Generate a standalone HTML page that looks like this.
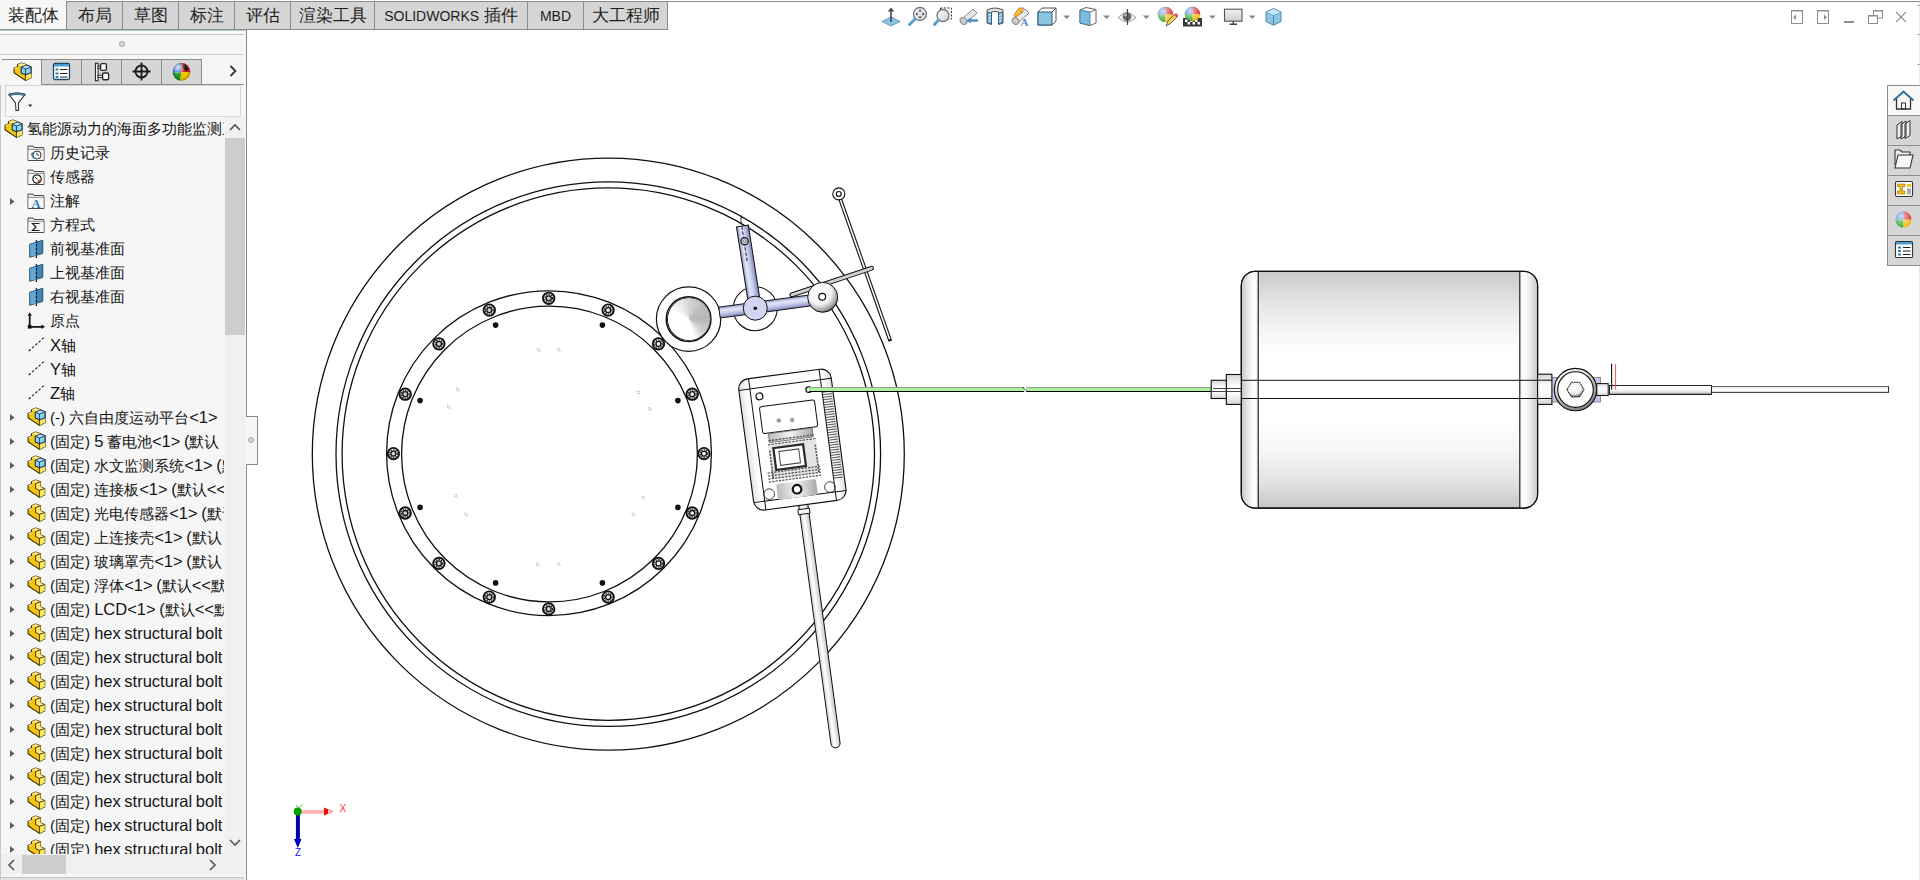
<!DOCTYPE html>
<html><head><meta charset="utf-8">
<style>
*{margin:0;padding:0;box-sizing:border-box}
html,body{width:1920px;height:880px;overflow:hidden;background:#fff;font-family:"Liberation Sans",sans-serif;color:#1a1a1a;position:relative}
.tab{position:absolute;top:1px;height:29px;background:#d5d5d5;border:1px solid #8c8c8c;font-size:17px;line-height:27px;text-align:center;color:#1e1e1e;white-space:nowrap}
.tab.act{background:#f6f6f6;border:none;top:0;height:29px;line-height:31px;padding-left:0}
.lt{font-size:14px}
.row{position:absolute;left:0;width:224px;height:24px;font-size:15px;line-height:24px;white-space:nowrap;color:#141414}
.row .t{position:absolute;top:0}
.row svg{position:absolute}
.ic{position:absolute}
.l{font-size:16.5px;word-spacing:-1px}
svg{overflow:visible}
</style></head><body>
<svg width="0" height="0" style="position:absolute">
<defs>
<symbol id="part" viewBox="0 0 26 26">
<path d="M4.1,8.3 L7.4,7.1 L7.4,4.7 L11.8,3 L16.5,4.7 L16.5,10 L20.7,11.5 L20.7,17.7 L15.4,20.4 L4.1,12.7 Z" fill="#f4c614" stroke="#3b2a00" stroke-width="1.1" stroke-linejoin="round"/>
<path d="M7.4,4.7 L11.8,3 L16.5,4.7 L11.5,6.5 Z" fill="#fbe58a"/>
<path d="M11.5,6.5 L16.5,4.7 L16.5,10 L11.5,11.5 Z" fill="#fbe766"/>
<path d="M11.5,11.5 L16.5,10 L20.7,11.5 L15.4,13.3 Z" fill="#fcef9a"/>
<path d="M15.4,13.3 L20.7,11.5 L20.7,17.7 L15.4,20.4 Z" fill="#fbe45c"/>
<path d="M4.1,8.3 L7.4,7.1 L8.6,8 L5.2,9.3 Z" fill="#fbe58a"/>
<path d="M11.5,6.5 V11.5 L15.4,13.3 V20.4 M11.5,6.5 L16.5,4.7 M15.4,13.3 L20.7,11.5" stroke="#3b2a00" stroke-width="0.9" fill="none"/>
</symbol>
<symbol id="asm" viewBox="0 0 26 26">
<path d="M4.1,8.3 L7.4,7.1 L7.4,4.7 L11.8,3 L16.5,4.7 L21,7 L21,17.7 L15.4,20.4 L4.1,12.7 Z" fill="#f4c614" stroke="#3b2a00" stroke-width="1.1" stroke-linejoin="round"/>
<path d="M7.4,4.7 L11.8,3 L16.5,4.7 L11.5,6.5 Z" fill="#fbe58a"/>
<path d="M4.1,8.3 L7.4,7.1 L8.6,8 L5.2,9.3 Z" fill="#fbe58a"/>
<path d="M15.4,13.3 L21,11.5 L21,17.7 L15.4,20.4 Z" fill="#fbe45c"/>
<path d="M15.4,13.3 V20.4" stroke="#3b2a00" stroke-width="0.9"/>
<path d="M11.2,7.3 L16.5,5.3 L21,7 L21,12.8 L15.5,14.8 L11.2,13 Z" fill="#8fd0ee" stroke="#0d3a5c" stroke-width="1.1" stroke-linejoin="round"/>
<path d="M11.7,7.4 L16.5,5.6 L20.5,7.1 L15.5,8.9 Z" fill="#b8e4f7"/>
<path d="M11.2,7.3 L15.5,9 L21,7 M15.5,9 V14.8" stroke="#0d3a5c" stroke-width="0.9" fill="none"/>
</symbol>
<symbol id="folder" viewBox="0 0 18 18">
<path d="M1,2 L6,2 L7,3.5 L16.5,3.5 L17,5 L17,16.5 L1,16.5 Z" fill="#e6e6e6" stroke="#4a4a4a" stroke-width="1"/>
<path d="M1.5,5.5 L16.5,5.5" stroke="#9a9a9a" stroke-width="1"/>
<rect x="1.5" y="6" width="15" height="10" fill="#f7f7f7"/>
</symbol>
<symbol id="f-hist" viewBox="0 0 18 18"><use href="#folder"/>
<circle cx="10" cy="11" r="4" fill="#fff" stroke="#333" stroke-width="1"/><path d="M10,8.5 V11 H12" stroke="#333" stroke-width="0.9" fill="none"/>
<path d="M3.5,10 L6,8 L6,12 Z" fill="#3a86b8"/><path d="M5,10 Q5,14 9,14.5" stroke="#3a86b8" stroke-width="1.5" fill="none"/></symbol>
<symbol id="f-sens" viewBox="0 0 18 18"><use href="#folder"/>
<circle cx="10" cy="11" r="4.2" fill="#fff" stroke="#222" stroke-width="1.2"/><path d="M8,9 L10.5,11.5" stroke="#333" stroke-width="1"/><path d="M10.5,14.5 A3.5,3.5 0 0 0 13.5,11.5 L11,12 Z" fill="#e03a1e"/></symbol>
<symbol id="f-ann" viewBox="0 0 18 18"><use href="#folder"/>
<text x="9" y="15.8" font-family="Liberation Serif" font-weight="bold" font-size="12.5" fill="#2a79ad" text-anchor="middle">A</text></symbol>
<symbol id="f-eq" viewBox="0 0 18 18"><use href="#folder"/>
<path d="M12.5,7.5 H5.5 L9,11 L5.5,14.5 H12.5" stroke="#222" stroke-width="1.2" fill="none"/></symbol>
<symbol id="plane" viewBox="0 0 18 18">
<path d="M2.7,4.2 L15.8,0.3 L15.8,13.4 L2.7,17.3 Z" fill="#3f86b6" stroke="#1d4f72" stroke-width="0.9"/>
<path d="M3.3,4.6 L9,3 L9,15.4 L3.3,16.6 Z" fill="#6aaad2"/>
<path d="M9.4,0 L9.4,18" stroke="#0b1f30" stroke-width="1.3" stroke-dasharray="2.6,1.3"/>
</symbol>
<symbol id="origin" viewBox="0 0 18 18">
<path d="M2.7,3 V14.8 H15.5" stroke="#111" stroke-width="1.7" fill="none"/>
<path d="M0.6,3.8 L2.7,0.3 L4.8,3.8 Z" fill="#111"/><path d="M14.5,12.6 L18,14.8 L14.5,17 Z" fill="#111"/>
<rect x="0.8" y="12.8" width="3.6" height="3.8" fill="#111"/>
</symbol>
<symbol id="axis" viewBox="0 0 18 18">
<path d="M1.7,15 L17.2,1.4" stroke="#222" stroke-width="1.1" stroke-dasharray="2.6,1.8"/>
</symbol>
</defs></svg>

<div style="position:absolute;left:66px;top:1px;width:1854px;height:1px;background:#8c8c8c"></div>
<div class="tab act" style="left:0px;width:66px">装配体</div>
<div class="tab" style="left:66px;width:57px">布局</div>
<div class="tab" style="left:122px;width:57px">草图</div>
<div class="tab" style="left:178px;width:57px">标注</div>
<div class="tab" style="left:234px;width:57px">评估</div>
<div class="tab" style="left:290px;width:85px">渲染工具</div>
<div class="tab" style="left:374px;width:154px"><span class="lt">SOLIDWORKS</span> 插件</div>
<div class="tab" style="left:527px;width:57px"><span class="lt">MBD</span></div>
<div class="tab" style="left:583px;width:85px">大工程师</div>
<div style="position:absolute;left:0px;top:30px;width:246px;height:850px;background:#f6f6f6"></div>
<div style="position:absolute;left:246px;top:30px;width:1px;height:850px;background:#8a8a8a"></div>
<div style="position:absolute;left:0px;top:29px;width:247px;height:1px;background:#8c8c8c"></div>
<div style="position:absolute;left:0px;top:30px;width:246px;height:1px;background:#a9cccc"></div>
<div style="position:absolute;left:0px;top:31px;width:246px;height:2px;background:#fbfbfb"></div>
<div style="position:absolute;left:0px;top:34px;width:244px;height:1px;background:#c4c4c4"></div>
<div style="position:absolute;left:119px;top:41px;width:6px;height:6px;border-radius:50%;background:#d6d6d6;border:1px solid #a9a9a9"></div>
<div style="position:absolute;left:0px;top:54px;width:244px;height:1px;background:#d2d2d2"></div>
<div style="position:absolute;left:2px;top:59px;width:200px;height:1px;background:#8c8c8c"></div>
<div style="position:absolute;left:41px;top:59px;width:41px;height:25px;background:#d6d6d6;border:1px solid #8c8c8c;border-bottom:none"></div>
<div style="position:absolute;left:81px;top:59px;width:41px;height:25px;background:#d6d6d6;border:1px solid #8c8c8c;border-bottom:none"></div>
<div style="position:absolute;left:121px;top:59px;width:41px;height:25px;background:#d6d6d6;border:1px solid #8c8c8c;border-bottom:none"></div>
<div style="position:absolute;left:161px;top:59px;width:41px;height:25px;background:#d6d6d6;border:1px solid #8c8c8c;border-bottom:none"></div>
<svg class="ic" style="left:9.6px;top:59.5px" width="26" height="26"><use href="#asm"/></svg>
<svg class="ic" style="left:52px;top:62px" width="19" height="19" viewBox="0 0 19 19">
<rect x="1.5" y="1.5" width="16" height="16" rx="1.5" fill="#fff" stroke="#1e4a66" stroke-width="1.3"/>
<rect x="2" y="2" width="15" height="2.5" fill="#4e9ccb"/>
<rect x="3.5" y="6.5" width="3" height="2" fill="#3b7fae"/><path d="M8,7.5 H15.5" stroke="#222" stroke-width="1"/>
<rect x="3.5" y="10.5" width="3" height="2" fill="#3b7fae"/><path d="M8,11.5 H15.5" stroke="#222" stroke-width="1"/>
<rect x="3.5" y="14" width="3" height="2" fill="#3b7fae"/><path d="M8,15 H15.5" stroke="#222" stroke-width="1"/>
</svg>
<svg class="ic" style="left:93px;top:62px" width="17" height="19" viewBox="0 0 17 19">
<rect x="2.5" y="1.3" width="2.6" height="17.4" fill="#fff" stroke="#2a2a2a" stroke-width="1.1"/>
<rect x="5" y="4.2" width="3" height="2.2" fill="#fff" stroke="#2a2a2a" stroke-width="1"/>
<rect x="5" y="13.2" width="4.5" height="2.2" fill="#fff" stroke="#2a2a2a" stroke-width="1"/>
<rect x="7.6" y="1.6" width="5.8" height="6.8" rx="1.3" fill="#fff" stroke="#2a2a2a" stroke-width="1.4"/>
<rect x="9.6" y="11" width="6" height="6.8" rx="1.3" fill="#fff" stroke="#2a2a2a" stroke-width="1.4"/>
</svg>
<svg class="ic" style="left:132px;top:62px" width="19" height="19" viewBox="0 0 19 19">
<circle cx="9.5" cy="9.5" r="6" fill="none" stroke="#1a1a1a" stroke-width="1.8"/>
<path d="M9.5,0.5 V18.5 M0.5,9.5 H18.5" stroke="#1a1a1a" stroke-width="1.8"/>
</svg>
<svg class="ic" style="left:172px;top:62px" width="19" height="19" viewBox="0 0 19 19">
<defs><radialGradient id="bs" cx="0.3" cy="0.25" r="0.45"><stop offset="0" stop-color="#fff" stop-opacity="0.85"/><stop offset="1" stop-color="#fff" stop-opacity="0"/></radialGradient>
<radialGradient id="bsh" cx="0.5" cy="0.5" r="0.5"><stop offset="0.7" stop-color="#000" stop-opacity="0"/><stop offset="1" stop-color="#000" stop-opacity="0.35"/></radialGradient></defs>
<path d="M9.5,10 L9,1 A8.8,8.8 0 0 0 0.7,10.5 Z" fill="#1f5fd8"/>
<path d="M9.5,10 L0.7,10.5 A8.8,8.8 0 0 0 8,18.7 Z" fill="#1d9a2a"/>
<path d="M9.5,10 L8,18.7 A8.8,8.8 0 0 0 18.3,10 Z" fill="#f2c200"/>
<path d="M9.5,10 L18.3,10 A8.8,8.8 0 0 0 9,1 Z" fill="#dd1f1f"/>
<ellipse cx="13.3" cy="5.8" rx="1.9" ry="3.6" transform="rotate(-35 13.3 5.8)" fill="#151515"/>
<circle cx="9.5" cy="9.8" r="8.8" fill="url(#bsh)"/>
<circle cx="9.5" cy="9.8" r="8.8" fill="url(#bs)"/>
</svg>
<svg class="ic" style="left:229px;top:65px" width="8" height="12" viewBox="0 0 8 12"><path d="M1.5,1 L6.5,6 L1.5,11" fill="none" stroke="#333" stroke-width="1.8"/></svg>
<div style="position:absolute;left:41px;top:84px;width:203px;height:1px;background:#8c8c8c"></div>
<div style="position:absolute;left:5px;top:85px;width:236px;height:32px;background:#f7f7f7;border:1px solid #d6d6d6"></div>
<div style="position:absolute;left:0px;top:85px;width:1px;height:795px;background:#c8c8c8"></div>
<svg class="ic" style="left:8px;top:92px" width="26" height="20" viewBox="0 0 26 20">
<path d="M1,2.5 Q9,0 17,2.5 L10.5,11 L10.5,18.5 L8,18.5 L7.5,11 Z" fill="#fff" stroke="#333" stroke-width="1.1"/>
<path d="M1,2 Q9,-0.5 17,2 L17,3.5 Q9,1 1,3.5 Z" fill="#4e9ccb" stroke="#1e4a66" stroke-width="0.8"/>
<path d="M20,12.5 L24.5,12.5 L22.25,15 Z" fill="#333"/>
</svg>
<div style="position:absolute;left:0;top:117px;width:224px;height:738px;overflow:hidden">
<div class="row" style="top:0px">
<svg style="left:1.4px;top:0px" width="26" height="26"><use href="#asm"/></svg>
<div class="t" style="left:27px">氢能源动力的海面多功能监测系统</div>
</div>
<div class="row" style="top:24px">
<svg style="left:27px;top:3px" width="18" height="18"><use href="#f-hist"/></svg>
<div class="t" style="left:50px">历史记录</div>
</div>
<div class="row" style="top:48px">
<svg style="left:27px;top:3px" width="18" height="18"><use href="#f-sens"/></svg>
<div class="t" style="left:50px">传感器</div>
</div>
<div class="row" style="top:72px">
<svg style="left:10px;top:9px" width="5" height="7" viewBox="0 0 5 7"><path d="M0,0 L4.5,3.5 L0,7 Z" fill="#5c5c5c"/></svg>
<svg style="left:27px;top:3px" width="18" height="18"><use href="#f-ann"/></svg>
<div class="t" style="left:50px">注解</div>
</div>
<div class="row" style="top:96px">
<svg style="left:27px;top:3px" width="18" height="18"><use href="#f-eq"/></svg>
<div class="t" style="left:50px">方程式</div>
</div>
<div class="row" style="top:120px">
<svg style="left:27px;top:3px" width="18" height="18"><use href="#plane"/></svg>
<div class="t" style="left:50px">前视基准面</div>
</div>
<div class="row" style="top:144px">
<svg style="left:27px;top:3px" width="18" height="18"><use href="#plane"/></svg>
<div class="t" style="left:50px">上视基准面</div>
</div>
<div class="row" style="top:168px">
<svg style="left:27px;top:3px" width="18" height="18"><use href="#plane"/></svg>
<div class="t" style="left:50px">右视基准面</div>
</div>
<div class="row" style="top:192px">
<svg style="left:27px;top:3px" width="18" height="18"><use href="#origin"/></svg>
<div class="t" style="left:50px">原点</div>
</div>
<div class="row" style="top:216px">
<svg style="left:27px;top:3px" width="18" height="18"><use href="#axis"/></svg>
<div class="t" style="left:50px"><span class="l">X</span>轴</div>
</div>
<div class="row" style="top:240px">
<svg style="left:27px;top:3px" width="18" height="18"><use href="#axis"/></svg>
<div class="t" style="left:50px"><span class="l">Y</span>轴</div>
</div>
<div class="row" style="top:264px">
<svg style="left:27px;top:3px" width="18" height="18"><use href="#axis"/></svg>
<div class="t" style="left:50px"><span class="l">Z</span>轴</div>
</div>
<div class="row" style="top:288px">
<svg style="left:10px;top:9px" width="5" height="7" viewBox="0 0 5 7"><path d="M0,0 L4.5,3.5 L0,7 Z" fill="#5c5c5c"/></svg>
<svg style="left:24px;top:0px" width="26" height="26"><use href="#asm"/></svg>
<div class="t" style="left:50px">(-) 六自由度运动平台<span class="l">&lt;1&gt;</span></div>
</div>
<div class="row" style="top:312px">
<svg style="left:10px;top:9px" width="5" height="7" viewBox="0 0 5 7"><path d="M0,0 L4.5,3.5 L0,7 Z" fill="#5c5c5c"/></svg>
<svg style="left:24px;top:0px" width="26" height="26"><use href="#asm"/></svg>
<div class="t" style="left:50px">(固定) <span class="l">5 </span>蓄电池<span class="l">&lt;1&gt; (</span>默认</div>
</div>
<div class="row" style="top:336px">
<svg style="left:10px;top:9px" width="5" height="7" viewBox="0 0 5 7"><path d="M0,0 L4.5,3.5 L0,7 Z" fill="#5c5c5c"/></svg>
<svg style="left:24px;top:0px" width="26" height="26"><use href="#asm"/></svg>
<div class="t" style="left:50px">(固定) 水文监测系统<span class="l">&lt;1&gt; (</span>默认</div>
</div>
<div class="row" style="top:360px">
<svg style="left:10px;top:9px" width="5" height="7" viewBox="0 0 5 7"><path d="M0,0 L4.5,3.5 L0,7 Z" fill="#5c5c5c"/></svg>
<svg style="left:24px;top:0px" width="26" height="26"><use href="#part"/></svg>
<div class="t" style="left:50px">(固定) 连接板<span class="l">&lt;1&gt; (</span>默认<span class="l">&lt;&lt;</span></div>
</div>
<div class="row" style="top:384px">
<svg style="left:10px;top:9px" width="5" height="7" viewBox="0 0 5 7"><path d="M0,0 L4.5,3.5 L0,7 Z" fill="#5c5c5c"/></svg>
<svg style="left:24px;top:0px" width="26" height="26"><use href="#part"/></svg>
<div class="t" style="left:50px">(固定) 光电传感器<span class="l">&lt;1&gt; (</span>默认</div>
</div>
<div class="row" style="top:408px">
<svg style="left:10px;top:9px" width="5" height="7" viewBox="0 0 5 7"><path d="M0,0 L4.5,3.5 L0,7 Z" fill="#5c5c5c"/></svg>
<svg style="left:24px;top:0px" width="26" height="26"><use href="#part"/></svg>
<div class="t" style="left:50px">(固定) 上连接壳<span class="l">&lt;1&gt; (</span>默认</div>
</div>
<div class="row" style="top:432px">
<svg style="left:10px;top:9px" width="5" height="7" viewBox="0 0 5 7"><path d="M0,0 L4.5,3.5 L0,7 Z" fill="#5c5c5c"/></svg>
<svg style="left:24px;top:0px" width="26" height="26"><use href="#part"/></svg>
<div class="t" style="left:50px">(固定) 玻璃罩壳<span class="l">&lt;1&gt; (</span>默认</div>
</div>
<div class="row" style="top:456px">
<svg style="left:10px;top:9px" width="5" height="7" viewBox="0 0 5 7"><path d="M0,0 L4.5,3.5 L0,7 Z" fill="#5c5c5c"/></svg>
<svg style="left:24px;top:0px" width="26" height="26"><use href="#part"/></svg>
<div class="t" style="left:50px">(固定) 浮体<span class="l">&lt;1&gt; (</span>默认<span class="l">&lt;&lt;</span>默</div>
</div>
<div class="row" style="top:480px">
<svg style="left:10px;top:9px" width="5" height="7" viewBox="0 0 5 7"><path d="M0,0 L4.5,3.5 L0,7 Z" fill="#5c5c5c"/></svg>
<svg style="left:24px;top:0px" width="26" height="26"><use href="#part"/></svg>
<div class="t" style="left:50px">(固定) <span class="l">LCD&lt;1&gt; (</span>默认<span class="l">&lt;&lt;</span>默</div>
</div>
<div class="row" style="top:504px">
<svg style="left:10px;top:9px" width="5" height="7" viewBox="0 0 5 7"><path d="M0,0 L4.5,3.5 L0,7 Z" fill="#5c5c5c"/></svg>
<svg style="left:24px;top:0px" width="26" height="26"><use href="#part"/></svg>
<div class="t" style="left:50px">(固定) <span class="l">hex structural bolt</span></div>
</div>
<div class="row" style="top:528px">
<svg style="left:10px;top:9px" width="5" height="7" viewBox="0 0 5 7"><path d="M0,0 L4.5,3.5 L0,7 Z" fill="#5c5c5c"/></svg>
<svg style="left:24px;top:0px" width="26" height="26"><use href="#part"/></svg>
<div class="t" style="left:50px">(固定) <span class="l">hex structural bolt</span></div>
</div>
<div class="row" style="top:552px">
<svg style="left:10px;top:9px" width="5" height="7" viewBox="0 0 5 7"><path d="M0,0 L4.5,3.5 L0,7 Z" fill="#5c5c5c"/></svg>
<svg style="left:24px;top:0px" width="26" height="26"><use href="#part"/></svg>
<div class="t" style="left:50px">(固定) <span class="l">hex structural bolt</span></div>
</div>
<div class="row" style="top:576px">
<svg style="left:10px;top:9px" width="5" height="7" viewBox="0 0 5 7"><path d="M0,0 L4.5,3.5 L0,7 Z" fill="#5c5c5c"/></svg>
<svg style="left:24px;top:0px" width="26" height="26"><use href="#part"/></svg>
<div class="t" style="left:50px">(固定) <span class="l">hex structural bolt</span></div>
</div>
<div class="row" style="top:600px">
<svg style="left:10px;top:9px" width="5" height="7" viewBox="0 0 5 7"><path d="M0,0 L4.5,3.5 L0,7 Z" fill="#5c5c5c"/></svg>
<svg style="left:24px;top:0px" width="26" height="26"><use href="#part"/></svg>
<div class="t" style="left:50px">(固定) <span class="l">hex structural bolt</span></div>
</div>
<div class="row" style="top:624px">
<svg style="left:10px;top:9px" width="5" height="7" viewBox="0 0 5 7"><path d="M0,0 L4.5,3.5 L0,7 Z" fill="#5c5c5c"/></svg>
<svg style="left:24px;top:0px" width="26" height="26"><use href="#part"/></svg>
<div class="t" style="left:50px">(固定) <span class="l">hex structural bolt</span></div>
</div>
<div class="row" style="top:648px">
<svg style="left:10px;top:9px" width="5" height="7" viewBox="0 0 5 7"><path d="M0,0 L4.5,3.5 L0,7 Z" fill="#5c5c5c"/></svg>
<svg style="left:24px;top:0px" width="26" height="26"><use href="#part"/></svg>
<div class="t" style="left:50px">(固定) <span class="l">hex structural bolt</span></div>
</div>
<div class="row" style="top:672px">
<svg style="left:10px;top:9px" width="5" height="7" viewBox="0 0 5 7"><path d="M0,0 L4.5,3.5 L0,7 Z" fill="#5c5c5c"/></svg>
<svg style="left:24px;top:0px" width="26" height="26"><use href="#part"/></svg>
<div class="t" style="left:50px">(固定) <span class="l">hex structural bolt</span></div>
</div>
<div class="row" style="top:696px">
<svg style="left:10px;top:9px" width="5" height="7" viewBox="0 0 5 7"><path d="M0,0 L4.5,3.5 L0,7 Z" fill="#5c5c5c"/></svg>
<svg style="left:24px;top:0px" width="26" height="26"><use href="#part"/></svg>
<div class="t" style="left:50px">(固定) <span class="l">hex structural bolt</span></div>
</div>
<div class="row" style="top:720px">
<svg style="left:10px;top:9px" width="5" height="7" viewBox="0 0 5 7"><path d="M0,0 L4.5,3.5 L0,7 Z" fill="#5c5c5c"/></svg>
<svg style="left:24px;top:0px" width="26" height="26"><use href="#part"/></svg>
<div class="t" style="left:50px">(固定) <span class="l">hex structural bolt</span></div>
</div>
</div>
<div style="position:absolute;left:225px;top:117px;width:20px;height:758px;background:#f0f0f0"></div>
<div style="position:absolute;left:225px;top:138px;width:20px;height:197px;background:#cdcdcd"></div>
<svg class="ic" style="left:229px;top:123px" width="12" height="8" viewBox="0 0 12 8"><path d="M1,7 L6,2 L11,7" fill="none" stroke="#555" stroke-width="1.6"/></svg>
<svg class="ic" style="left:229px;top:839px" width="12" height="8" viewBox="0 0 12 8"><path d="M1,1 L6,6 L11,1" fill="none" stroke="#555" stroke-width="1.6"/></svg>
<div style="position:absolute;left:1px;top:854px;width:224px;height:20px;background:#f0f0f0"></div>
<div style="position:absolute;left:22px;top:855px;width:44px;height:19px;background:#cdcdcd"></div>
<svg class="ic" style="left:7px;top:859px" width="8" height="12" viewBox="0 0 8 12"><path d="M7,1 L2,6 L7,11" fill="none" stroke="#555" stroke-width="1.6"/></svg>
<svg class="ic" style="left:209px;top:859px" width="8" height="12" viewBox="0 0 8 12"><path d="M1,1 L6,6 L1,11" fill="none" stroke="#555" stroke-width="1.6"/></svg>
<div style="position:absolute;left:1px;top:877px;width:243px;height:1px;background:#c4c4c4"></div>
<div style="position:absolute;left:1px;top:878px;width:243px;height:2px;background:#e2e2e2"></div>
<div style="position:absolute;left:246px;top:416px;width:12px;height:49px;background:#f6f6f6;border:1px solid #8a8a8a;border-left:none"></div>
<div style="position:absolute;left:248px;top:437px;width:6px;height:6px;border-radius:50%;background:#d6d6d6;border:1px solid #a9a9a9"></div>
<svg style="position:absolute;left:0;top:0" width="1920" height="880" viewBox="0 0 1920 880">
<defs>
<linearGradient id="tankV" x1="0" y1="271" x2="0" y2="508" gradientUnits="userSpaceOnUse">
<stop offset="0" stop-color="#c8c8c8"/><stop offset="0.12" stop-color="#e2e2e2"/><stop offset="0.26" stop-color="#f6f6f6"/><stop offset="0.36" stop-color="#ffffff"/>
<stop offset="0.62" stop-color="#ffffff"/><stop offset="0.76" stop-color="#f6f6f6"/><stop offset="0.9" stop-color="#e0e0e0"/><stop offset="1" stop-color="#c6c6c6"/></linearGradient>
<linearGradient id="capL" x1="1241" y1="0" x2="1258" y2="0" gradientUnits="userSpaceOnUse"><stop offset="0" stop-color="#c4c4c4"/><stop offset="0.45" stop-color="#ececec"/><stop offset="0.8" stop-color="#ffffff"/><stop offset="1" stop-color="#f0f0f0"/></linearGradient>
<linearGradient id="capR" x1="1538" y1="0" x2="1520" y2="0" gradientUnits="userSpaceOnUse"><stop offset="0" stop-color="#c4c4c4"/><stop offset="0.45" stop-color="#ececec"/><stop offset="0.8" stop-color="#ffffff"/><stop offset="1" stop-color="#f0f0f0"/></linearGradient>
<linearGradient id="fitV" x1="0" y1="0" x2="0" y2="1"><stop offset="0" stop-color="#d6d6d6"/><stop offset="0.35" stop-color="#fafafa"/><stop offset="0.65" stop-color="#fafafa"/><stop offset="1" stop-color="#d6d6d6"/></linearGradient>
<linearGradient id="lav" x1="0" y1="0" x2="0" y2="1"><stop offset="0" stop-color="#8e96c4"/><stop offset="0.3" stop-color="#e4e7fb"/><stop offset="0.6" stop-color="#c9cdee"/><stop offset="1" stop-color="#7e86b8"/></linearGradient>
<linearGradient id="rodG" x1="0" y1="0" x2="1" y2="0"><stop offset="0" stop-color="#d0d0d0"/><stop offset="0.4" stop-color="#ffffff"/><stop offset="1" stop-color="#c8c8c8"/></linearGradient>
<radialGradient id="ballG" cx="0.4" cy="0.35" r="0.7"><stop offset="0" stop-color="#ffffff"/><stop offset="0.55" stop-color="#f4f4f4"/><stop offset="0.85" stop-color="#a0a0a0"/><stop offset="1" stop-color="#303030"/></radialGradient>
<radialGradient id="valG" cx="0.45" cy="0.4" r="0.65"><stop offset="0" stop-color="#ffffff"/><stop offset="0.6" stop-color="#eeeeee"/><stop offset="1" stop-color="#555555"/></radialGradient>
<linearGradient id="pipeG" x1="0" y1="0" x2="0" y2="1"><stop offset="0" stop-color="#ffffff"/><stop offset="0.55" stop-color="#f6f6f6"/><stop offset="0.8" stop-color="#d0d0d0"/><stop offset="1" stop-color="#707070"/></linearGradient>
<linearGradient id="gaugeG" x1="0" y1="0" x2="1" y2="1"><stop offset="0" stop-color="#ffffff"/><stop offset="0.5" stop-color="#e6e6e6"/><stop offset="0.75" stop-color="#b8b8b8"/><stop offset="1" stop-color="#f4f4f4"/></linearGradient>
</defs>
<circle cx="608.3" cy="454.1" r="296" fill="none" stroke="#101010" stroke-width="1.3"/>
<circle cx="608.3" cy="454.1" r="272.3" fill="none" stroke="#101010" stroke-width="1.3"/>
<circle cx="608.3" cy="454.1" r="266.2" fill="none" stroke="#101010" stroke-width="1.3"/>
<circle cx="549" cy="453.2" r="162.4" fill="none" stroke="#101010" stroke-width="1.3"/>
<circle cx="549.5" cy="454" r="147.9" fill="none" stroke="#101010" stroke-width="1.3"/>
<circle cx="548.7" cy="298.3" r="5.7" fill="#fff" stroke="#101010" stroke-width="1.9"/>
<circle cx="548.7" cy="298.3" r="3.9" fill="none" stroke="#222" stroke-width="1.1" stroke-dasharray="1.6,0.9"/>
<circle cx="548.7" cy="298.3" r="2.5" fill="#d6d0cb" stroke="#101010" stroke-width="1.3"/>
<circle cx="608.1" cy="310.1" r="5.7" fill="#fff" stroke="#101010" stroke-width="1.9"/>
<circle cx="608.1" cy="310.1" r="3.9" fill="none" stroke="#222" stroke-width="1.1" stroke-dasharray="1.6,0.9"/>
<circle cx="608.1" cy="310.1" r="2.5" fill="#f4f4f4" stroke="#101010" stroke-width="1.3"/>
<circle cx="658.5" cy="343.8" r="5.7" fill="#fff" stroke="#101010" stroke-width="1.9"/>
<circle cx="658.5" cy="343.8" r="3.9" fill="none" stroke="#222" stroke-width="1.1" stroke-dasharray="1.6,0.9"/>
<circle cx="658.5" cy="343.8" r="2.5" fill="#f4f4f4" stroke="#101010" stroke-width="1.3"/>
<circle cx="692.2" cy="394.2" r="5.7" fill="#fff" stroke="#101010" stroke-width="1.9"/>
<circle cx="692.2" cy="394.2" r="3.9" fill="none" stroke="#222" stroke-width="1.1" stroke-dasharray="1.6,0.9"/>
<circle cx="692.2" cy="394.2" r="2.5" fill="#f4f4f4" stroke="#101010" stroke-width="1.3"/>
<circle cx="704.0" cy="453.6" r="5.7" fill="#fff" stroke="#101010" stroke-width="1.9"/>
<circle cx="704.0" cy="453.6" r="3.9" fill="none" stroke="#222" stroke-width="1.1" stroke-dasharray="1.6,0.9"/>
<circle cx="704.0" cy="453.6" r="2.5" fill="#f4f4f4" stroke="#101010" stroke-width="1.3"/>
<circle cx="692.2" cy="513.0" r="5.7" fill="#fff" stroke="#101010" stroke-width="1.9"/>
<circle cx="692.2" cy="513.0" r="3.9" fill="none" stroke="#222" stroke-width="1.1" stroke-dasharray="1.6,0.9"/>
<circle cx="692.2" cy="513.0" r="2.5" fill="#f4f4f4" stroke="#101010" stroke-width="1.3"/>
<circle cx="658.5" cy="563.4" r="5.7" fill="#fff" stroke="#101010" stroke-width="1.9"/>
<circle cx="658.5" cy="563.4" r="3.9" fill="none" stroke="#222" stroke-width="1.1" stroke-dasharray="1.6,0.9"/>
<circle cx="658.5" cy="563.4" r="2.5" fill="#f4f4f4" stroke="#101010" stroke-width="1.3"/>
<circle cx="608.1" cy="597.1" r="5.7" fill="#fff" stroke="#101010" stroke-width="1.9"/>
<circle cx="608.1" cy="597.1" r="3.9" fill="none" stroke="#222" stroke-width="1.1" stroke-dasharray="1.6,0.9"/>
<circle cx="608.1" cy="597.1" r="2.5" fill="#f4f4f4" stroke="#101010" stroke-width="1.3"/>
<circle cx="548.7" cy="608.9" r="5.7" fill="#fff" stroke="#101010" stroke-width="1.9"/>
<circle cx="548.7" cy="608.9" r="3.9" fill="none" stroke="#222" stroke-width="1.1" stroke-dasharray="1.6,0.9"/>
<circle cx="548.7" cy="608.9" r="2.5" fill="#d6d0cb" stroke="#101010" stroke-width="1.3"/>
<circle cx="489.3" cy="597.1" r="5.7" fill="#fff" stroke="#101010" stroke-width="1.9"/>
<circle cx="489.3" cy="597.1" r="3.9" fill="none" stroke="#222" stroke-width="1.1" stroke-dasharray="1.6,0.9"/>
<circle cx="489.3" cy="597.1" r="2.5" fill="#d6d0cb" stroke="#101010" stroke-width="1.3"/>
<circle cx="438.9" cy="563.4" r="5.7" fill="#fff" stroke="#101010" stroke-width="1.9"/>
<circle cx="438.9" cy="563.4" r="3.9" fill="none" stroke="#222" stroke-width="1.1" stroke-dasharray="1.6,0.9"/>
<circle cx="438.9" cy="563.4" r="2.5" fill="#d6d0cb" stroke="#101010" stroke-width="1.3"/>
<circle cx="405.2" cy="513.0" r="5.7" fill="#fff" stroke="#101010" stroke-width="1.9"/>
<circle cx="405.2" cy="513.0" r="3.9" fill="none" stroke="#222" stroke-width="1.1" stroke-dasharray="1.6,0.9"/>
<circle cx="405.2" cy="513.0" r="2.5" fill="#d6d0cb" stroke="#101010" stroke-width="1.3"/>
<circle cx="393.4" cy="453.6" r="5.7" fill="#fff" stroke="#101010" stroke-width="1.9"/>
<circle cx="393.4" cy="453.6" r="3.9" fill="none" stroke="#222" stroke-width="1.1" stroke-dasharray="1.6,0.9"/>
<circle cx="393.4" cy="453.6" r="2.5" fill="#d6d0cb" stroke="#101010" stroke-width="1.3"/>
<circle cx="405.2" cy="394.2" r="5.7" fill="#fff" stroke="#101010" stroke-width="1.9"/>
<circle cx="405.2" cy="394.2" r="3.9" fill="none" stroke="#222" stroke-width="1.1" stroke-dasharray="1.6,0.9"/>
<circle cx="405.2" cy="394.2" r="2.5" fill="#d6d0cb" stroke="#101010" stroke-width="1.3"/>
<circle cx="438.9" cy="343.8" r="5.7" fill="#fff" stroke="#101010" stroke-width="1.9"/>
<circle cx="438.9" cy="343.8" r="3.9" fill="none" stroke="#222" stroke-width="1.1" stroke-dasharray="1.6,0.9"/>
<circle cx="438.9" cy="343.8" r="2.5" fill="#d6d0cb" stroke="#101010" stroke-width="1.3"/>
<circle cx="489.3" cy="310.1" r="5.7" fill="#fff" stroke="#101010" stroke-width="1.9"/>
<circle cx="489.3" cy="310.1" r="3.9" fill="none" stroke="#222" stroke-width="1.1" stroke-dasharray="1.6,0.9"/>
<circle cx="489.3" cy="310.1" r="2.5" fill="#d6d0cb" stroke="#101010" stroke-width="1.3"/>
<circle cx="602.4" cy="325.1" r="2.8" fill="#101010"/>
<circle cx="677.9" cy="400.6" r="2.8" fill="#101010"/>
<circle cx="677.9" cy="507.4" r="2.8" fill="#101010"/>
<circle cx="602.4" cy="582.9" r="2.8" fill="#101010"/>
<circle cx="495.6" cy="582.9" r="2.8" fill="#101010"/>
<circle cx="420.1" cy="507.4" r="2.8" fill="#101010"/>
<circle cx="420.1" cy="400.6" r="2.8" fill="#101010"/>
<circle cx="495.6" cy="325.1" r="2.8" fill="#101010"/>
<g fill="#9a9a9a"><rect x="536.9" y="348.1" width="1" height="1"/><rect x="538.9" y="348.6" width="1" height="1"/><rect x="537.4" y="350.1" width="1" height="1"/><rect x="539.4" y="350.6" width="1" height="1"/></g>
<g fill="#9a9a9a"><rect x="557.0" y="348.1" width="1" height="1"/><rect x="559.0" y="348.6" width="1" height="1"/><rect x="557.5" y="350.1" width="1" height="1"/><rect x="559.5" y="350.6" width="1" height="1"/></g>
<g fill="#9a9a9a"><rect x="455.8" y="387.9" width="1" height="1"/><rect x="457.8" y="388.4" width="1" height="1"/><rect x="456.3" y="389.9" width="1" height="1"/><rect x="458.3" y="390.4" width="1" height="1"/></g>
<g fill="#9a9a9a"><rect x="446.9" y="405.2" width="1" height="1"/><rect x="448.9" y="405.7" width="1" height="1"/><rect x="447.4" y="407.2" width="1" height="1"/><rect x="449.4" y="407.7" width="1" height="1"/></g>
<g fill="#9a9a9a"><rect x="636.6" y="390.5" width="1" height="1"/><rect x="638.6" y="391" width="1" height="1"/><rect x="637.1" y="392.5" width="1" height="1"/><rect x="639.1" y="393" width="1" height="1"/></g>
<g fill="#9a9a9a"><rect x="647.8" y="407.2" width="1" height="1"/><rect x="649.8" y="407.7" width="1" height="1"/><rect x="648.3" y="409.2" width="1" height="1"/><rect x="650.3" y="409.7" width="1" height="1"/></g>
<g fill="#9a9a9a"><rect x="453.8" y="494.1" width="1" height="1"/><rect x="455.8" y="494.6" width="1" height="1"/><rect x="454.3" y="496.1" width="1" height="1"/><rect x="456.3" y="496.6" width="1" height="1"/></g>
<g fill="#9a9a9a"><rect x="464.3" y="512.7" width="1" height="1"/><rect x="466.3" y="513.2" width="1" height="1"/><rect x="464.8" y="514.7" width="1" height="1"/><rect x="466.8" y="515.2" width="1" height="1"/></g>
<g fill="#9a9a9a"><rect x="641.3" y="495.7" width="1" height="1"/><rect x="643.3" y="496.2" width="1" height="1"/><rect x="641.8" y="497.7" width="1" height="1"/><rect x="643.8" y="498.2" width="1" height="1"/></g>
<g fill="#9a9a9a"><rect x="631.6" y="512.7" width="1" height="1"/><rect x="633.6" y="513.2" width="1" height="1"/><rect x="632.1" y="514.7" width="1" height="1"/><rect x="634.1" y="515.2" width="1" height="1"/></g>
<g fill="#9a9a9a"><rect x="535.8" y="562.5" width="1" height="1"/><rect x="537.8" y="563" width="1" height="1"/><rect x="536.3" y="564.5" width="1" height="1"/><rect x="538.3" y="565" width="1" height="1"/></g>
<g fill="#9a9a9a"><rect x="557.0" y="562.5" width="1" height="1"/><rect x="559.0" y="563" width="1" height="1"/><rect x="557.5" y="564.5" width="1" height="1"/><rect x="559.5" y="565" width="1" height="1"/></g>
<line x1="840.3" y1="199.5" x2="889.7" y2="339.3" stroke="#101010" stroke-width="3.8" stroke-linecap="square"/>
<line x1="840.3" y1="199.5" x2="889.7" y2="339.3" stroke="#fff" stroke-width="1.6"/>
<circle cx="838.8" cy="193.9" r="6" fill="#fff" stroke="#101010" stroke-width="1.1"/>
<circle cx="838.8" cy="193.9" r="2.4" fill="#fff" stroke="#101010" stroke-width="1.2"/>
<circle cx="688.6" cy="319.1" r="32.2" fill="#fff" stroke="#101010" stroke-width="1.2"/>
<circle cx="688.6" cy="319.2" r="22.4" fill="#fff" stroke="#101010" stroke-width="1.4"/>
<circle cx="688.6" cy="319.2" r="21" fill="none" stroke="#101010" stroke-width="1.2"/>
<circle cx="755.2" cy="308.7" r="22" fill="#fff" stroke="#101010" stroke-width="1.1"/>
<line x1="791.9" y1="294.9" x2="871.5" y2="268.3" stroke="#101010" stroke-width="4.8" stroke-linecap="round"/>
<line x1="791.9" y1="294.9" x2="871.5" y2="268.3" stroke="#d2d2d2" stroke-width="2.8" stroke-linecap="round"/>
<g transform="translate(719.5,312.6) rotate(-7.64)"><rect x="0" y="-5.5" width="93.3" height="11" fill="url(#lav)" stroke="#101010" stroke-width="1"/></g>
<g transform="translate(755.2,308) rotate(-98.87)"><rect x="0" y="-6.0" width="83.0" height="12" fill="url(#lav)" stroke="#101010" stroke-width="1"/></g>
<path d="M741,221 L747.2,262" stroke="#101010" stroke-width="0.9" stroke-dasharray="3.5,1.8"/>
<path d="M740.8,220.5 L741.6,215.5" stroke="#101010" stroke-width="1"/>
<circle cx="744.6" cy="241.2" r="3.6" fill="#d8d8e4" stroke="#101010" stroke-width="1.2"/>
<circle cx="744.6" cy="241.2" r="1.6" fill="none" stroke="#555" stroke-width="0.7"/>
<circle cx="755.3" cy="308.2" r="12" fill="#d2d6f2" stroke="#101010" stroke-width="1"/>
<circle cx="755.3" cy="308.2" r="1.8" fill="#101010"/>
<circle cx="822.7" cy="297.3" r="15" fill="url(#ballG)" stroke="#101010" stroke-width="1"/>
<circle cx="822.2" cy="296.8" r="3.4" fill="#fff" stroke="#101010" stroke-width="1.2"/>
<g transform="translate(802.6,500) rotate(-7.7)"><rect x="-4.6" y="0" width="9.2" height="250" rx="4.6" fill="url(#rodG)" stroke="#101010" stroke-width="1"/></g>
<g transform="translate(803.6,509) rotate(-7.7)"><rect x="-5.8" y="0" width="11.6" height="5" fill="#f4f4f4" stroke="#101010" stroke-width="0.9"/></g>
<g transform="translate(792.4,439.6) rotate(-7.55)">
<defs><linearGradient id="frL" x1="0" y1="0" x2="1" y2="0"><stop offset="0" stop-color="#e2e2e2"/><stop offset="0.08" stop-color="#fdfdfd"/><stop offset="0.92" stop-color="#fdfdfd"/><stop offset="1" stop-color="#dedede"/></linearGradient><linearGradient id="camG" x1="0" y1="0" x2="1" y2="0"><stop offset="0" stop-color="#bdbdbd"/><stop offset="0.5" stop-color="#f2f2f2"/><stop offset="1" stop-color="#a8a8a8"/></linearGradient></defs>
<rect x="-46.6" y="-66.15" width="93.2" height="132.3" rx="10" fill="url(#frL)" stroke="#101010" stroke-width="1.1"/>
<rect x="-35.5" y="-55.8" width="71.2" height="113.2" fill="#fff"/>
<line x1="35.7" y1="-43.0" x2="45.1" y2="-43.0" stroke="#2a2a2a" stroke-width="0.75"/>
<line x1="35.7" y1="-40.5" x2="45.1" y2="-40.5" stroke="#2a2a2a" stroke-width="0.75"/>
<line x1="35.7" y1="-37.9" x2="45.1" y2="-37.9" stroke="#2a2a2a" stroke-width="0.75"/>
<line x1="35.7" y1="-35.4" x2="45.1" y2="-35.4" stroke="#2a2a2a" stroke-width="0.75"/>
<line x1="35.7" y1="-32.8" x2="45.1" y2="-32.8" stroke="#2a2a2a" stroke-width="0.75"/>
<line x1="35.7" y1="-30.2" x2="45.1" y2="-30.2" stroke="#2a2a2a" stroke-width="0.75"/>
<line x1="35.7" y1="-27.7" x2="45.1" y2="-27.7" stroke="#2a2a2a" stroke-width="0.75"/>
<line x1="35.7" y1="-25.2" x2="45.1" y2="-25.2" stroke="#2a2a2a" stroke-width="0.75"/>
<line x1="35.7" y1="-22.6" x2="45.1" y2="-22.6" stroke="#2a2a2a" stroke-width="0.75"/>
<line x1="35.7" y1="-20.1" x2="45.1" y2="-20.1" stroke="#2a2a2a" stroke-width="0.75"/>
<line x1="35.7" y1="-17.5" x2="45.1" y2="-17.5" stroke="#2a2a2a" stroke-width="0.75"/>
<line x1="35.7" y1="-15.0" x2="45.1" y2="-15.0" stroke="#2a2a2a" stroke-width="0.75"/>
<line x1="35.7" y1="-12.4" x2="45.1" y2="-12.4" stroke="#2a2a2a" stroke-width="0.75"/>
<line x1="35.7" y1="-9.9" x2="45.1" y2="-9.9" stroke="#2a2a2a" stroke-width="0.75"/>
<line x1="35.7" y1="-7.3" x2="45.1" y2="-7.3" stroke="#2a2a2a" stroke-width="0.75"/>
<line x1="35.7" y1="-4.8" x2="45.1" y2="-4.8" stroke="#2a2a2a" stroke-width="0.75"/>
<line x1="35.7" y1="-2.2" x2="45.1" y2="-2.2" stroke="#2a2a2a" stroke-width="0.75"/>
<line x1="35.7" y1="0.3" x2="45.1" y2="0.3" stroke="#2a2a2a" stroke-width="0.75"/>
<line x1="35.7" y1="2.9" x2="45.1" y2="2.9" stroke="#2a2a2a" stroke-width="0.75"/>
<line x1="35.7" y1="5.4" x2="45.1" y2="5.4" stroke="#2a2a2a" stroke-width="0.75"/>
<line x1="35.7" y1="8.0" x2="45.1" y2="8.0" stroke="#2a2a2a" stroke-width="0.75"/>
<line x1="35.7" y1="10.5" x2="45.1" y2="10.5" stroke="#2a2a2a" stroke-width="0.75"/>
<line x1="35.7" y1="13.1" x2="45.1" y2="13.1" stroke="#2a2a2a" stroke-width="0.75"/>
<line x1="35.7" y1="15.6" x2="45.1" y2="15.6" stroke="#2a2a2a" stroke-width="0.75"/>
<line x1="35.7" y1="18.2" x2="45.1" y2="18.2" stroke="#2a2a2a" stroke-width="0.75"/>
<line x1="35.7" y1="20.7" x2="45.1" y2="20.7" stroke="#2a2a2a" stroke-width="0.75"/>
<line x1="35.7" y1="23.3" x2="45.1" y2="23.3" stroke="#2a2a2a" stroke-width="0.75"/>
<line x1="35.7" y1="25.8" x2="45.1" y2="25.8" stroke="#2a2a2a" stroke-width="0.75"/>
<line x1="35.7" y1="28.4" x2="45.1" y2="28.4" stroke="#2a2a2a" stroke-width="0.75"/>
<line x1="35.7" y1="30.9" x2="45.1" y2="30.9" stroke="#2a2a2a" stroke-width="0.75"/>
<line x1="35.7" y1="33.5" x2="45.1" y2="33.5" stroke="#2a2a2a" stroke-width="0.75"/>
<line x1="35.7" y1="36.0" x2="45.1" y2="36.0" stroke="#2a2a2a" stroke-width="0.75"/>
<line x1="35.7" y1="38.6" x2="45.1" y2="38.6" stroke="#2a2a2a" stroke-width="0.75"/>
<line x1="35.7" y1="41.1" x2="45.1" y2="41.1" stroke="#2a2a2a" stroke-width="0.75"/>
<line x1="35.7" y1="43.7" x2="45.1" y2="43.7" stroke="#2a2a2a" stroke-width="0.75"/>
<path d="M-46.6,-55.8 H46.6 M-46.6,57.4 H46.6 M-35.5,-66.15 V66.15 M35.7,-66.15 V66.15" stroke="#101010" stroke-width="1" fill="none"/>
<rect x="-28.5" y="-36.7" width="55.5" height="27" rx="2" fill="#fff" stroke="#101010" stroke-width="1"/>
<circle cx="-11" cy="-20.7" r="2.3" fill="#a0a0a0"/><circle cx="2.4" cy="-19.5" r="2.3" fill="#a0a0a0"/>
<circle cx="-27" cy="-47.2" r="3.4" fill="#fff" stroke="#101010" stroke-width="1.2"/>
<circle cx="22.7" cy="-47.4" r="2.8" fill="#fff" stroke="#101010" stroke-width="1.3"/>
<circle cx="-30.2" cy="51" r="5.3" fill="none" stroke="#333" stroke-width="0.9"/>
<circle cx="31" cy="52" r="5.3" fill="none" stroke="#333" stroke-width="0.9"/>
<rect x="-23" y="-9" width="44" height="9" fill="url(#camG)" stroke="#666" stroke-width="0.8"/>
<path d="M-24,-2 H22 M-25,2 H23" stroke="#555" stroke-width="1.3" stroke-dasharray="2.5,1"/>
<rect x="-25" y="3" width="48" height="34" fill="#e4e4e4"/>
<rect x="-20" y="6" width="30" height="22" fill="#fff" stroke="#2a2a2a" stroke-width="2.2"/>
<rect x="-15" y="10" width="20" height="14" fill="#fff" stroke="#444" stroke-width="1"/>
<path d="M-24,8 V36 M22,8 V36" stroke="#555" stroke-width="1.6" stroke-dasharray="2,1.2"/>
<line x1="-29" y1="30" x2="24" y2="30" stroke="#555" stroke-width="1.3" stroke-dasharray="2.2,1.2"/>
<line x1="-29" y1="33" x2="24" y2="33" stroke="#555" stroke-width="1.3" stroke-dasharray="2.2,1.2"/>
<line x1="-29" y1="36" x2="24" y2="36" stroke="#555" stroke-width="1.3" stroke-dasharray="2.2,1.2"/>
<line x1="-29" y1="39" x2="24" y2="39" stroke="#555" stroke-width="1.3" stroke-dasharray="2.2,1.2"/>
<rect x="-22" y="42" width="40" height="16" rx="2" fill="url(#camG)"/>
<circle cx="-1.9" cy="49.8" r="4.3" fill="#fff" stroke="#111" stroke-width="2.2"/>
</g>
<rect x="809" y="387.3" width="402.2" height="4.2" fill="#aaf29a"/>
<line x1="809" y1="387.5" x2="1211.2" y2="387.5" stroke="#9a9a9a" stroke-width="1"/>
<line x1="809" y1="391.5" x2="1211.2" y2="391.5" stroke="#000" stroke-width="1.2"/>
<rect x="1024.2" y="386" width="2" height="7" fill="#fff"/>
<path d="M1022.5,387 L1027,391.5" stroke="#101010" stroke-width="0.8"/>
<rect x="1241.3" y="271.4" width="296.3" height="236.7" rx="14" fill="url(#tankV)" stroke="#101010" stroke-width="1.2"/>
<path d="M1254,272 Q1242,272 1242,285 V495 Q1242,507.5 1254,507.5 H1258.2 V272 Z" fill="url(#capL)"/>
<path d="M1525,272 Q1537,272 1537,285 V495 Q1537,507.5 1525,507.5 H1519.8 V272 Z" fill="url(#capR)"/>
<rect x="1241.3" y="271.4" width="296.3" height="236.7" rx="14" fill="none" stroke="#101010" stroke-width="1.2"/>
<path d="M1258.2,271.4 V508.1 M1519.8,271.4 V508.1" stroke="#101010" stroke-width="1.1"/>
<path d="M1241.3,380.3 H1537.6 M1241.3,398.5 H1537.6" stroke="#101010" stroke-width="1"/>
<rect x="1226.3" y="374.5" width="14.9" height="29.9" fill="url(#fitV)" stroke="#101010" stroke-width="1.1"/>
<rect x="1211.2" y="380.3" width="15.1" height="18.2" fill="url(#fitV)" stroke="#101010" stroke-width="1.1"/>
<path d="M1213,388.5 H1241.2 M1211.2,391.5 H1241.2" stroke="#333" stroke-width="0.9"/>
<rect x="1537.6" y="374.2" width="14.3" height="30.2" fill="url(#fitV)" stroke="#101010" stroke-width="1.1"/>
<path d="M1537.6,380.2 H1551.9 M1537.6,398.5 H1551.9" stroke="#101010" stroke-width="1"/>
<rect x="1552.5" y="377.5" width="6.3" height="24.5" fill="#c0c6e6" stroke="#555" stroke-width="0.6"/>
<rect x="1593.5" y="377.5" width="7" height="24.5" fill="#c0c6e6" stroke="#555" stroke-width="0.6"/>
<circle cx="1575.5" cy="389.6" r="21.2" fill="url(#valG)" stroke="#101010" stroke-width="1.1"/>
<circle cx="1575.5" cy="389.6" r="17.8" fill="#fff" stroke="#101010" stroke-width="1.1"/>
<polygon points="1567,389.6 1571.3,382.3 1579.7,382.3 1584,389.6 1579.7,396.9 1571.3,396.9" fill="url(#valG)" stroke="#101010" stroke-width="1" stroke-dasharray="2,0.7"/>
<rect x="1596.8" y="383.6" width="11.4" height="11.9" fill="url(#fitV)" stroke="#101010" stroke-width="1"/>
<rect x="1609.5" y="385.5" width="102" height="9" fill="url(#pipeG)" stroke="#101010" stroke-width="0.9"/>
<rect x="1711.6" y="386.6" width="177" height="5.7" fill="#fff" stroke="#101010" stroke-width="0.9"/>
<line x1="1711.6" y1="386.6" x2="1888.6" y2="386.6" stroke="#777" stroke-width="0.9"/>
<line x1="1611.6" y1="363.4" x2="1611.6" y2="389.6" stroke="#101010" stroke-width="1.1"/>
<line x1="1615.6" y1="363.9" x2="1615.6" y2="389.6" stroke="#ff5050" stroke-width="1"/>
<rect x="301.5" y="810" width="30" height="3.8" fill="#ffb3b3"/>
<path d="M324,807.5 L333.5,811.5 L324,815.5 Z" fill="#e01010"/>
<path d="M328,809.5 L334,811.8 L328,814 Z" fill="#ffc0c0"/>
<rect x="295.9" y="815" width="4" height="25" fill="#0000a8"/>
<path d="M294,839 L301.5,839 L297.8,848 Z" fill="#0000c0"/>
<circle cx="297.7" cy="811.6" r="4" fill="#00a000"/>
<path d="M296,805 L298.5,808 L302.5,804.5" stroke="#20d020" stroke-width="0.9" fill="none"/>
<text x="339.5" y="812" font-family="Liberation Sans" font-size="10" fill="#ff3030">X</text>
<text x="295" y="856" font-family="Liberation Sans" font-size="10" fill="#2020ff">Z</text>
</svg>
<div style="position:absolute;left:1919px;top:2px;width:1px;height:878px;background:#e8e8e8"></div>
<div style="position:absolute;left:1917px;top:5px;width:3px;height:1px;background:#b0b0b0"></div>
<div style="position:absolute;left:1917px;top:34px;width:3px;height:1px;background:#b0b0b0"></div>
<div style="position:absolute;left:1917px;top:64px;width:3px;height:1px;background:#b0b0b0"></div>
<div style="position:absolute;left:667.6px;top:298.2px;width:42px;height:42px;border-radius:50%;background:conic-gradient(from 0deg, #d6d6d6 0deg, #bcbcbc 50deg, #b8b8b8 95deg, #cfcfcf 130deg, #ffffff 165deg, #ffffff 290deg, #eeeeee 325deg, #d6d6d6 360deg)"></div>
<svg style="position:absolute;left:0;top:0" width="1920" height="40" viewBox="0 0 1920 40">
<defs>
<linearGradient id="bl" x1="0" y1="0" x2="1" y2="1"><stop offset="0" stop-color="#d4ecf8"/><stop offset="1" stop-color="#6aaed4"/></linearGradient>
<linearGradient id="glass" x1="0" y1="0" x2="1" y2="1"><stop offset="0" stop-color="#ffffff"/><stop offset="1" stop-color="#c8d0d8"/></linearGradient>
<linearGradient id="mon" x1="0" y1="0" x2="0" y2="1"><stop offset="0" stop-color="#f0f0f0"/><stop offset="1" stop-color="#d0d0d0"/></linearGradient>
<radialGradient id="shine" cx="0.35" cy="0.3" r="0.7"><stop offset="0" stop-color="#fff" stop-opacity="0.75"/><stop offset="1" stop-color="#fff" stop-opacity="0"/></radialGradient>
</defs>
<path d="M882,21.5 L891,17 L900,21.5 L891,26 Z" fill="#8cc4e4" stroke="#4a88b0" stroke-width="0.8"/>
<path d="M891,22 V10" stroke="#444" stroke-width="1.6"/><path d="M887.8,11.5 L891,7.5 L894.2,11.5 Z" fill="#444"/>
<circle cx="920" cy="14" r="6.5" fill="url(#glass)" stroke="#777" stroke-width="1.3"/>
<path d="M914.5,19.5 L909.5,24.5" stroke="#5aa0cc" stroke-width="3" stroke-linecap="round"/>
<path d="M920,9.5 L918.3,11.5 H921.7 Z M920,18.5 L918.3,16.5 H921.7 Z M915.5,14 L917.5,12.3 V15.7 Z M924.5,14 L922.5,12.3 V15.7 Z" fill="#333"/>
<rect x="940.5" y="8" width="11" height="11" fill="none" stroke="#333" stroke-width="1" stroke-dasharray="2,1.5"/>
<circle cx="943" cy="15.5" r="6" fill="url(#glass)" stroke="#777" stroke-width="1.3"/>
<path d="M938.5,20 L934.5,24.5" stroke="#5aa0cc" stroke-width="3" stroke-linecap="round"/>
<path d="M962,19 L973,9 L977,13 L966,23 Z" fill="#e8e8e8" stroke="#888" stroke-width="1"/>
<ellipse cx="963.5" cy="21" rx="3" ry="3.6" transform="rotate(-45 963.5 21)" fill="#ccc" stroke="#888" stroke-width="1"/>
<path d="M968,20.5 H978" stroke="#4a8fc4" stroke-width="2.4"/><path d="M971,17.5 L966.5,20.5 L971,23.5 Z" fill="#4a8fc4"/>
<path d="M987,10 Q995,6 1003,10 V23 L998.5,24.5 V12 Q995,11 991.5,12 V24.5 L987,23 Z" fill="#e0e0e0" stroke="#555" stroke-width="1"/>
<path d="M987.5,12 L991.5,13 V24 L987.5,22.5 Z M998.5,13 L1002.5,12 V22.5 L998.5,24 Z" fill="#7ab4d6" stroke="#2c5c80" stroke-width="0.8"/>
<path d="M988,16 L991,14 M988,19 L991,17 M988,22 L991,20 M999,16 L1002,14 M999,19 L1002,17 M999,22 L1002,20" stroke="#e8f4fb" stroke-width="0.9"/>
<path d="M1014,19 L1025,9 L1029,13 L1018,23 Z" fill="#e8e8e8" stroke="#888" stroke-width="1"/>
<ellipse cx="1015.5" cy="21" rx="3" ry="3.6" transform="rotate(-45 1015.5 21)" fill="#ccc" stroke="#888" stroke-width="1"/>
<path d="M1014,15 L1019,8 L1024,8 L1020,12 L1023,12 L1015,17 Z" fill="#f5c430" stroke="#d86a1a" stroke-width="0.8"/>
<text x="1020.5" y="26" font-family="Liberation Serif" font-weight="bold" font-size="11" fill="#4a8fc4">A</text>
<path d="M1038,12 L1042,8 H1056 V21 L1052,25 H1038 Z" fill="#fff" stroke="#555" stroke-width="1"/>
<rect x="1038" y="12" width="14" height="13" fill="#8cc4e4" stroke="#2c5c80" stroke-width="1"/>
<path d="M1052,12 L1056,8 M1052,25 L1056,21" stroke="#555" stroke-width="1"/>
<path d="M1063.1,15.5 L1070.1,15.5 L1066.6,19 Z" fill="#8a8a8a"/>
<path d="M1080,10 L1086,7.5 L1096,9.5 V23 L1090,25.5 L1080,23 Z" fill="#fff" stroke="#666" stroke-width="1"/>
<path d="M1080,10 L1090,12 V25.5 L1080,23 Z" fill="#7cbcdf" stroke="#3a6f94" stroke-width="0.8"/>
<path d="M1090,12 L1096,9.5" stroke="#666" stroke-width="0.9"/>
<path d="M1103.0,15.5 L1110.0,15.5 L1106.5,19 Z" fill="#8a8a8a"/>
<path d="M1118,17.5 Q1127,8.5 1136,17.5 Q1127,26 1118,17.5 Z" fill="#f4f4f4" stroke="#9a9a9a" stroke-width="1"/>
<circle cx="1127" cy="16.5" r="4.3" fill="#666"/><circle cx="1125.5" cy="15" r="1.5" fill="#bbb"/>
<path d="M1127.5,9 V25" stroke="#444" stroke-width="1.2"/>
<path d="M1142.7,15.5 L1149.7,15.5 L1146.2,19 Z" fill="#8a8a8a"/>
<path d="M1165.5,14.5 L1165.5,6.7 A7.8,7.8 0 0 0 1157.7,14.5 Z" fill="#3f78d8"/>
<path d="M1165.5,14.5 L1157.7,14.5 A7.8,7.8 0 0 0 1165.5,22.3 Z" fill="#3aa83a"/>
<path d="M1165.5,14.5 L1165.5,22.3 A7.8,7.8 0 0 0 1173.3,14.5 Z" fill="#f0c020"/>
<path d="M1165.5,14.5 L1173.3,14.5 A7.8,7.8 0 0 0 1165.5,6.7 Z" fill="#d83030"/>
<circle cx="1165.5" cy="14.5" r="7.8" fill="url(#shine)"/>
<path d="M1166,26 L1168,21 L1175,14 L1177.5,16.5 L1170.5,23.5 Z" fill="#f5d35a" stroke="#555" stroke-width="0.9"/>
<path d="M1174,15 L1176,13 L1178.5,15.5 L1176.5,17.5 Z" fill="#e05050"/>
<path d="M1192.5,14.5 L1192.5,6.7 A7.8,7.8 0 0 0 1184.7,14.5 Z" fill="#3f78d8"/>
<path d="M1192.5,14.5 L1184.7,14.5 A7.8,7.8 0 0 0 1192.5,22.3 Z" fill="#3aa83a"/>
<path d="M1192.5,14.5 L1192.5,22.3 A7.8,7.8 0 0 0 1200.3,14.5 Z" fill="#f0c020"/>
<path d="M1192.5,14.5 L1200.3,14.5 A7.8,7.8 0 0 0 1192.5,6.7 Z" fill="#d83030"/>
<circle cx="1192.5" cy="14.5" r="7.8" fill="url(#shine)"/>
<rect x="1183" y="18" width="19" height="8.5" fill="#3a3a3a"/>
<path d="M1185,19.5 h2.5 v2.5 h-2.5 Z M1190,19.5 h2.5 v2.5 h-2.5 Z M1195,19.5 h2.5 v2.5 h-2.5 Z M1187.5,22 h2.5 v2.5 h-2.5 Z M1192.5,22 h2.5 v2.5 h-2.5 Z M1197.5,22 h2.5 v2.5 h-2.5 Z" fill="#fff"/>
<path d="M1192.5,14 L1192.5,6.8 A7.2,7.2 0 0 0 1185.3,14 Z" fill="#3f78d8"/>
<path d="M1192.5,14 L1185.3,14 A7.2,7.2 0 0 0 1192.5,21.2 Z" fill="#3aa83a"/>
<path d="M1192.5,14 L1192.5,21.2 A7.2,7.2 0 0 0 1199.7,14 Z" fill="#f0c020"/>
<path d="M1192.5,14 L1199.7,14 A7.2,7.2 0 0 0 1192.5,6.8 Z" fill="#d83030"/>
<circle cx="1192.5" cy="14" r="7.2" fill="url(#shine)"/>
<path d="M1208.9,15.5 L1215.9,15.5 L1212.4,19 Z" fill="#8a8a8a"/>
<rect x="1224.5" y="9.2" width="17.5" height="12" fill="url(#mon)" stroke="#555" stroke-width="1.1"/>
<path d="M1233.25,21.5 V23.5 M1229.5,24.2 H1237" stroke="#444" stroke-width="1.4"/>
<path d="M1248.7,15.5 L1255.7,15.5 L1252.2,19 Z" fill="#8a8a8a"/>
<path d="M1266,12 L1273.5,8.5 L1281,12 V21.5 L1273.5,25.2 L1266,21.5 Z" fill="#8cc8e6" stroke="#4a86ae" stroke-width="1"/>
<path d="M1266,12 L1273.5,15.5 L1281,12 M1273.5,15.5 V25.2" stroke="#4a86ae" stroke-width="0.9" fill="none"/>
<path d="M1266.5,12.2 L1273.5,9 L1280.5,12.2 L1273.5,15.2 Z" fill="#c4e6f6"/>
<rect x="1791.5" y="10.5" width="11" height="13" fill="none" stroke="#8e8e8e" stroke-width="1"/><rect x="1791" y="10" width="12" height="1.5" fill="#8e8e8e"/>
<path d="M1796,14.5 L1793,17.3 L1796,20 Z" fill="#8e8e8e"/>
<rect x="1817.5" y="10.5" width="11" height="13" fill="none" stroke="#8e8e8e" stroke-width="1"/><rect x="1817" y="10" width="12" height="1.5" fill="#8e8e8e"/>
<path d="M1824,14.5 L1827,17.3 L1824,20 Z" fill="#8e8e8e"/>
<rect x="1844" y="21" width="10" height="2" fill="#8e8e8e"/>
<rect x="1873.5" y="10.5" width="9" height="7.5" fill="none" stroke="#8e8e8e" stroke-width="1"/><rect x="1873" y="10" width="10" height="1.5" fill="#8e8e8e"/>
<rect x="1868.5" y="15.5" width="9" height="8" fill="#fff" stroke="#8e8e8e" stroke-width="1"/><rect x="1868" y="15" width="10" height="1.5" fill="#8e8e8e"/>
<path d="M1896,12 L1906,22 M1906,12 L1896,22" stroke="#8e8e8e" stroke-width="1.1"/>
</svg>
<div style="position:absolute;left:1887px;top:85px;width:33px;height:181px;background:#d6d6d6;border:1px solid #8c8c8c;border-right:none"></div>
<div style="position:absolute;left:1888px;top:86px;width:32px;height:29px;background:#f8f8f8"></div>
<div style="position:absolute;left:1887px;top:115px;width:33px;height:1px;background:#8c8c8c"></div>
<div style="position:absolute;left:1887px;top:145px;width:33px;height:1px;background:#8c8c8c"></div>
<div style="position:absolute;left:1887px;top:175px;width:33px;height:1px;background:#8c8c8c"></div>
<div style="position:absolute;left:1887px;top:205px;width:33px;height:1px;background:#8c8c8c"></div>
<div style="position:absolute;left:1887px;top:235px;width:33px;height:1px;background:#8c8c8c"></div>
<svg style="position:absolute;left:0;top:0" width="1920" height="880" viewBox="0 0 1920 880">
<path d="M1893.5,100.5 L1903.5,91.5 L1913.5,100.5" fill="none" stroke="#2f6f9e" stroke-width="2"/>
<path d="M1896.5,99 V109 H1910.5 V99" fill="none" stroke="#333" stroke-width="1.3"/><rect x="1901.5" y="103" width="4" height="6" fill="none" stroke="#333" stroke-width="1"/>
<path d="M1897,125 L1902,121.5 V136 L1897,139 Z M1901,124.5 L1906,121 V136 L1901,139 Z M1905,124 L1910,120.5 V135.5 L1905,138.5 Z" fill="#eee" stroke="#333" stroke-width="1"/>
<path d="M1895,165 V150 H1900 L1902,152 H1910 V155" fill="#eee" stroke="#333" stroke-width="1.1"/>
<path d="M1895,168 L1898,155 H1913 L1910,168 Z" fill="#f6f6f6" stroke="#333" stroke-width="1.1"/>
<rect x="1895.5" y="181.5" width="17" height="15" rx="1.5" fill="#fff" stroke="#333" stroke-width="1.1"/>
<path d="M1897.5,184 H1905 V186.5 H1902.5 V191 H1905 V194 H1897.5 V191 H1900 V186.5 H1897.5 Z" fill="#f0c020" stroke="#8a6a00" stroke-width="0.6"/>
<rect x="1907" y="184" width="4" height="3" fill="#f0c020"/><rect x="1907" y="188.5" width="4" height="6" fill="#aaa"/>
<path d="M1903.5,219.5 L1903.5,211.5 A8,8 0 0 0 1895.5,219.5 Z" fill="#3f78d8"/>
<path d="M1903.5,219.5 L1895.5,219.5 A8,8 0 0 0 1903.5,227.5 Z" fill="#3aa83a"/>
<path d="M1903.5,219.5 L1903.5,227.5 A8,8 0 0 0 1911.5,219.5 Z" fill="#f0c020"/>
<path d="M1903.5,219.5 L1911.5,219.5 A8,8 0 0 0 1903.5,211.5 Z" fill="#d83030"/>
<circle cx="1903.5" cy="219.5" r="8" fill="url(#shine)"/>
<rect x="1895.5" y="241.5" width="17" height="16" rx="1" fill="#fff" stroke="#333" stroke-width="1.1"/>
<rect x="1896" y="242" width="16" height="2.5" fill="#4e9ccb"/>
<path d="M1898,247.5 H1901 M1898,251 H1901 M1898,254.5 H1901" stroke="#3b7fae" stroke-width="1.8"/><path d="M1903,247.5 H1910.5 M1903,251 H1910.5 M1903,254.5 H1910.5" stroke="#222" stroke-width="1"/>
</svg>
</body></html>
